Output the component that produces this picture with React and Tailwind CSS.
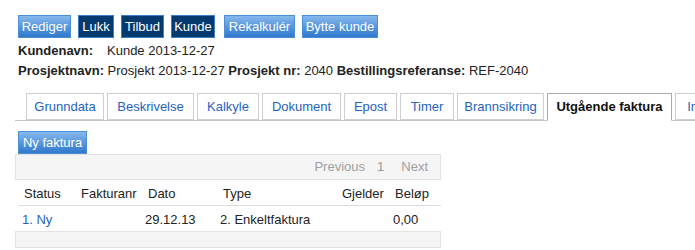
import React from "react";

const lightBtn =
  "h-[23px] border border-[#4b8fd8] bg-gradient-to-b from-[#86b8ec] via-[#5a98dc] to-[#2f78cc] text-white text-[13px] leading-[21px] text-center";
const darkBtn =
  "h-[23px] border border-[#3d7fc6] bg-[#063a6f] text-white text-[13px] leading-[21px] text-center";

const tabs = [
  { label: "Grunndata", w: "w-[78px]" },
  { label: "Beskrivelse", w: "w-[87px]" },
  { label: "Kalkyle", w: "w-[62px]" },
  { label: "Dokument", w: "w-[79px]" },
  { label: "Epost", w: "w-[53px]" },
  { label: "Timer", w: "w-[54px]" },
  { label: "Brannsikring", w: "w-[87px]" },
  { label: "Utgående faktura", w: "w-[125px]", active: true },
  { label: "Innkommende faktura", w: "w-[150px]" },
];

const App = () => {
  return (
    <div
      className="w-[695px] h-[250px] overflow-hidden bg-white text-[13px] text-[#222]"
      style={{ fontFamily: '"Liberation Sans", Arial, sans-serif' }}
    >
      {/* Action buttons */}
      <div className="flex pt-[15px] pl-[18px]">
        <button className={`${lightBtn} w-[53px]`}>Rediger</button>
        <button className={`${darkBtn} w-[36px] ml-[7px]`}>Lukk</button>
        <button className={`${darkBtn} w-[43px] ml-[7px]`}>Tilbud</button>
        <button className={`${darkBtn} w-[44px] ml-[7px]`}>Kunde</button>
        <button className={`${lightBtn} w-[71px] ml-[9px]`}>Rekalkulér</button>
        <button className={`${lightBtn} w-[76px] ml-[7px]`}>Bytte kunde</button>
      </div>

      {/* Project info */}
      <div className="pl-[18px] pt-[3px] leading-[20px]">
        <div className="flex">
          <span className="font-bold w-[89px]">Kundenavn:</span>
          <span>Kunde 2013-12-27</span>
        </div>
        <div>
          <span className="font-bold">Prosjektnavn:</span> Prosjekt 2013-12-27{" "}
          <span className="font-bold">Prosjekt nr:</span> 2040{" "}
          <span className="font-bold">Bestillingsreferanse:</span> REF-2040
        </div>
      </div>

      {/* Tabs */}
      <div className="ml-[15px] mt-[12px] border-b border-[#c8c8c8] pl-[11px] flex gap-[3px] h-[28px] whitespace-nowrap">
        {tabs.map((t) => (
          <div
            key={t.label}
            className={`${t.w} shrink-0 border text-center leading-[26px] ${
              t.active
                ? "border-[#aaa] border-b-white bg-white font-bold text-[#111] h-[28px]"
                : "border-[#cfcfcf] text-[#2563c0] h-[27px]"
            }`}
          >
            {t.label}
          </div>
        ))}
      </div>

      {/* Ny faktura */}
      <div className="pl-[18px] pt-[10px]">
        <button className={`${lightBtn} w-[69px]`}>Ny faktura</button>
      </div>

      {/* Table */}
      <div className="ml-[15px] w-[426px]">
        <div className="h-[26px] border border-[#e2e2e2] bg-[#f5f5f5] flex items-center justify-end pr-[12px] text-[#a0a0a0]">
          <span>Previous</span>
          <span className="ml-[12px] text-[#999]">1</span>
          <span className="ml-[17px]">Next</span>
        </div>
        <div className="ml-[4px] w-[422px]">
          <div className="flex h-[26px] items-end pb-[2px] border-b border-[#dcdcdc]">
            <span className="w-[62px] pl-[5px]">Status</span>
            <span className="w-[67px]">Fakturanr</span>
            <span className="w-[75px]">Dato</span>
            <span className="w-[119px]">Type</span>
            <span className="w-[53px]">Gjelder</span>
            <span>Beløp</span>
          </div>
          <div className="flex h-[25px] items-center pt-[2px]">
            <span className="w-[126px] pl-[3px] text-[#2563c0]">1. Ny</span>
            <span className="w-[75px]">29.12.13</span>
            <span className="w-[173px]">2. Enkeltfaktura</span>
            <span>0,00</span>
          </div>
        </div>
        <div className="h-[17px] border border-[#e2e2e2] bg-[#f5f5f5]" />
      </div>
    </div>
  );
};

export default App;
